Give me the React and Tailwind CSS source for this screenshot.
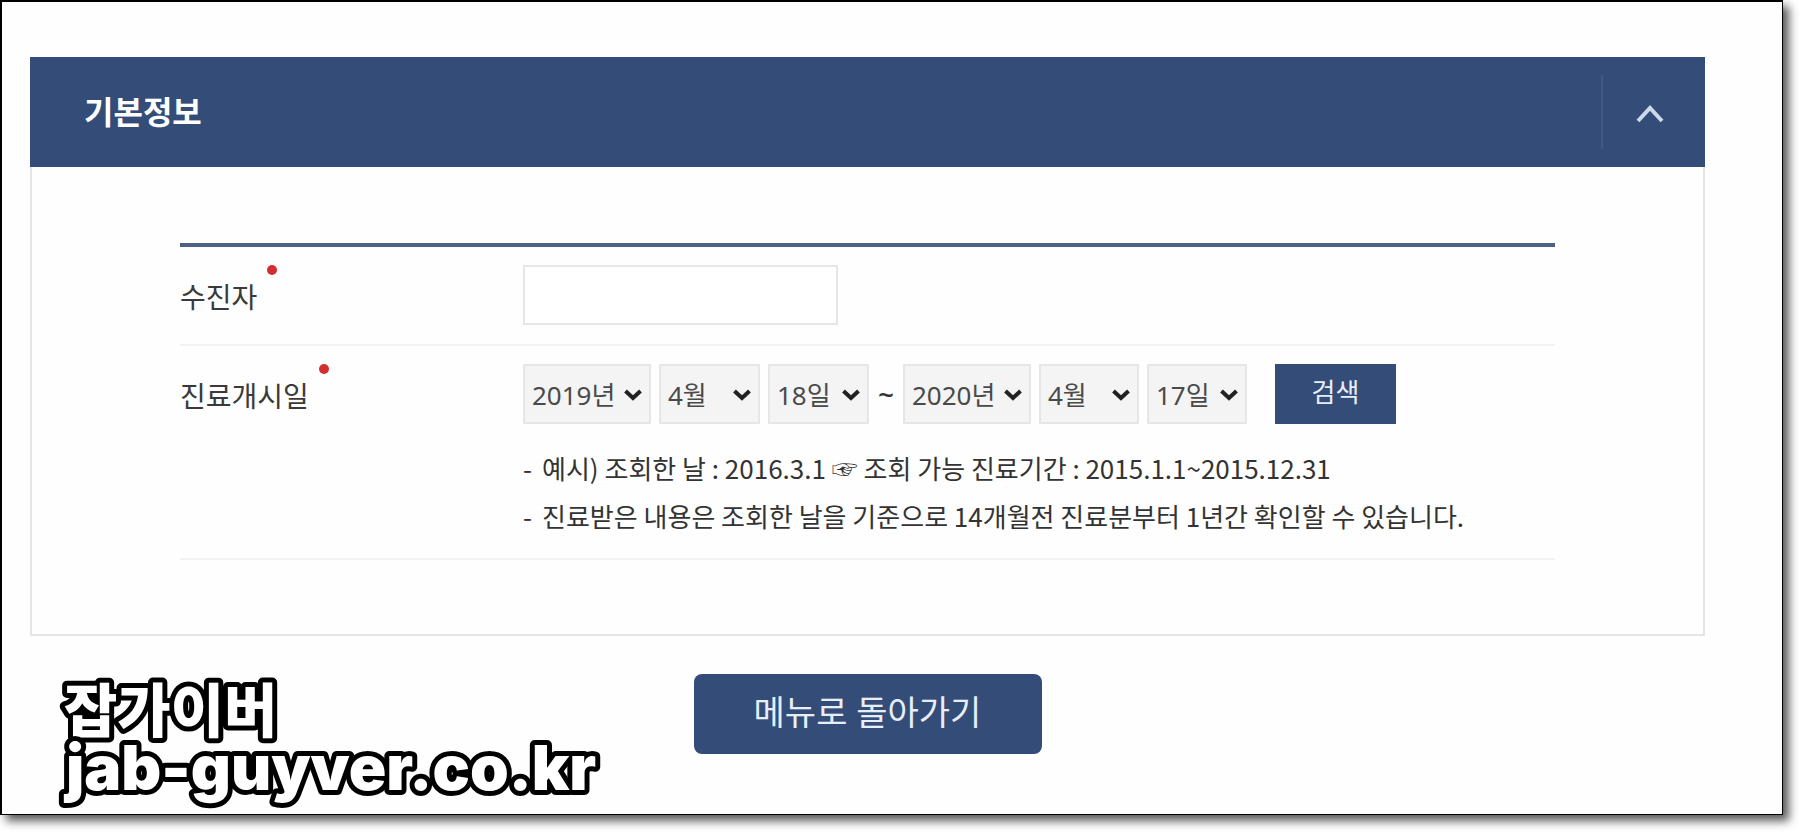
import React, { useState } from 'react';

const years = ['2018년', '2019년', '2020년'];
const months = Array.from({ length: 12 }, (_, i) => `${i + 1}월`);
const days = Array.from({ length: 31 }, (_, i) => `${i + 1}일`);

const notes = [
  '예시) 조회한 날 : 2016.3.1 ☞ 조회 가능 진료기간 : 2015.1.1~2015.12.31',
  '진료받은 내용은 조회한 날을 기준으로 14개월전 진료분부터 1년간 확인할 수 있습니다.',
];

const DateSelect = ({ id, label, options, value, className }) => (
  <div className={`relative h-[60px] ${className}`}>
    <select
      id={id}
      aria-label={label}
      defaultValue={value}
      className="h-full w-full appearance-none border-2 border-[#e6e6e6] bg-[#f4f4f4] pt-[2px] pl-[7px] text-[26px] text-[#4a4a4a] outline-none"
    >
      {options.map((option) => (
        <option key={option}>{option}</option>
      ))}
    </select>
    <svg
      viewBox="0 0 18 12"
      className="pointer-events-none absolute top-[25px] right-[9px] h-3 w-[18px]"
      fill="none"
      stroke="#222222"
      strokeWidth="4"
    >
      <path d="M1.5 2 L9 9 L16.5 2" />
    </svg>
  </div>
);

const RequiredLabel = ({ htmlFor, children }) => (
  <label htmlFor={htmlFor} className="flex h-[60px] w-[343px] shrink-0 gap-[10px] text-[28px] leading-[64px] text-[#3a3a3a]">
    {children}
    <span className="h-[10px] w-[10px] rounded-full bg-[#d32f2f]" />
  </label>
);

const App = () => {
  const [open, setOpen] = useState(true);

  return (
    <div className="flex min-h-screen bg-white pr-[17px] pb-[17px] font-['Noto_Sans','Noto_Sans_CJK_KR',sans-serif]">
      <main className="relative flex-1 border-t-2 border-r border-b border-l-2 border-black bg-[#fefefe] pt-[55px] pr-[77px] pb-[60px] pl-7 shadow-[6px_6px_9px_rgba(0,0,0,0.65)]">
        <section>
          {/* Header */}
          <div className="flex h-[110px] items-center justify-between bg-[#344c78] pl-[54px]">
            <h2 className="pb-1 font-['Noto_Sans_CJK_KR',sans-serif] text-[32px] leading-none font-bold text-white">기본정보</h2>
            <button
              type="button"
              aria-label="접기"
              onClick={() => setOpen(!open)}
              className="flex h-[74px] w-[104px] items-center justify-center border-l-2 border-[#40578a] pt-1 pr-2"
            >
              <svg viewBox="0 0 28 18" className="h-[18px] w-7" fill="none" stroke="#cddaee" strokeWidth="4">
                <path d="M2 16 L14 3 L26 16" />
              </svg>
            </button>
          </div>

          {/* Form */}
          {open && (
            <form className="border-2 border-t-0 border-[#e5e5e5] px-[148px] pt-[76px] pb-[74px]">
              <div className="flex border-t-4 border-b-2 border-t-[#4d6186] border-b-[#f2f2f2] pt-[18px] pb-[19px]">
                <RequiredLabel htmlFor="patient">수진자</RequiredLabel>
                <input
                  id="patient"
                  type="text"
                  className="h-[60px] w-[315px] border-2 border-[#e6e6e6] bg-white px-2 text-[26px] outline-none"
                />
              </div>

              <div className="flex border-b-2 border-[#f2f2f2] pt-[18px] pb-[18px]">
                <RequiredLabel htmlFor="start-year">진료개시일</RequiredLabel>
                <div>
                  <div className="flex items-center gap-2">
                    <DateSelect id="start-year" label="시작 연도" options={years} value="2019년" className="w-[128px]" />
                    <DateSelect id="start-month" label="시작 월" options={months} value="4월" className="w-[101px]" />
                    <DateSelect id="start-day" label="시작 일" options={days} value="18일" className="w-[101px]" />
                    <span className="w-[18px] text-center text-[28px] leading-none font-medium text-[#333333]">~</span>
                    <DateSelect id="end-year" label="종료 연도" options={years} value="2020년" className="w-[128px]" />
                    <DateSelect id="end-month" label="종료 월" options={months} value="4월" className="w-[100px]" />
                    <DateSelect id="end-day" label="종료 일" options={days} value="17일" className="w-[100px]" />
                    <button type="button" className="ml-5 h-[60px] w-[121px] bg-[#344c78] pb-1 text-[26px] leading-none text-[#e8eef8]">
                      검색
                    </button>
                  </div>
                  <ul className="mt-5 font-['Noto_Sans_CJK_KR','DejaVu_Sans',sans-serif] text-[26px] leading-[48px] text-[#333333]">
                    {notes.map((note) => (
                      <li key={note} className="flex gap-[10px]">
                        <span>-</span>
                        {note}
                      </li>
                    ))}
                  </ul>
                </div>
              </div>
            </form>
          )}
        </section>

        <div className="mt-[38px] flex justify-center">
          <button type="button" className="h-20 w-[348px] rounded-lg bg-[#344c78] pb-1 text-[34px] leading-none text-[#e8eef8]">
            메뉴로 돌아가기
          </button>
        </div>

        {/* Watermark */}
        <svg
          className="pointer-events-none absolute bottom-2 left-14 h-[148px] w-[560px] overflow-visible"
          fill="white"
          stroke="black"
          strokeWidth="10"
          strokeLinejoin="round"
        >
          <text x="6" y="74" paintOrder="stroke" className="font-['Noto_Sans_CJK_KR',sans-serif] text-[58px] font-black">잡가이버</text>
          <text x="8" y="132" paintOrder="stroke" className="font-['Inter',sans-serif] text-[62px] font-black">jab-guyver.co.kr</text>
        </svg>
      </main>
    </div>
  );
};

export default App;
